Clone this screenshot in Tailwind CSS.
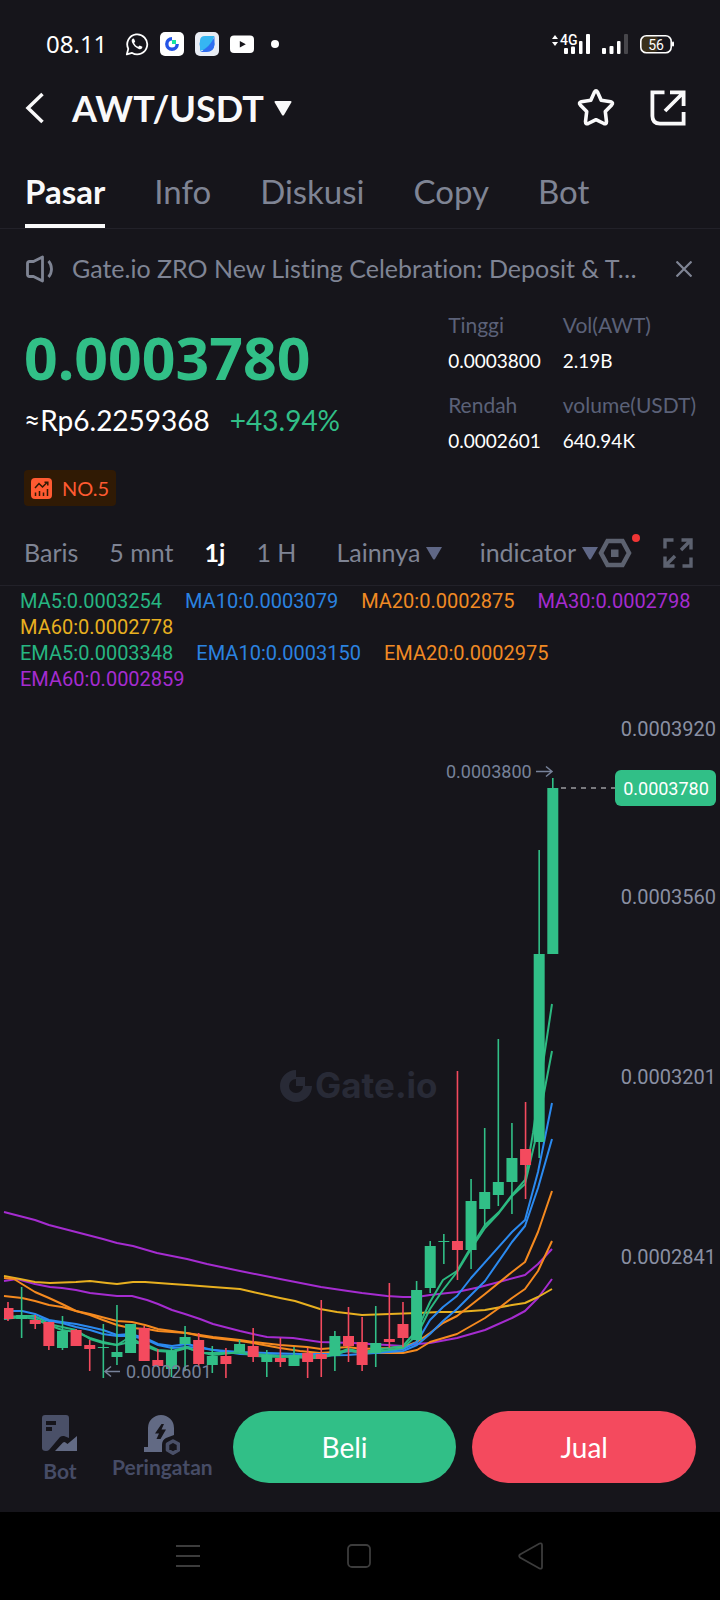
<!DOCTYPE html>
<html lang="id">

<head>
    <meta charset="UTF-8" />
    <meta name="viewport" content="width=device-width, initial-scale=1.0" />
    <title>AWT/USDT</title>
    <script src="https://cdn.jsdelivr.net/npm/@tailwindcss/browser@4"></script>
</head>

<body class="bg-black">
    <div class="bg-[#16151b] font-['Lato','Liberation_Sans',sans-serif] text-[#7f8494] overflow-hidden [font-variant-ligatures:none]">
        <!-- Status bar -->
        <div class="flex items-center h-[88px] px-[46px] text-white">
            <span class="text-2xl leading-6 mr-[18px] font-['Noto_Sans',sans-serif]">08.11</span>
            <div class="flex items-center gap-[11px]">
                <svg class="size-6" viewBox="0 0 24 24" fill="none" stroke="#fff" stroke-width="1.8">
                    <path d="M1.8 22.4l1.5-5.6a10 10 0 1 1 3.8 4.1z" stroke-linejoin="round" />
                    <path d="M8 6.6c-1.4.7-1.6 2.2-.9 3.9 1.3 3 3.6 5.3 6.7 6.4 1.7.6 3 .2 3.5-1.3l.1-.9-2.7-1.3-1.4 1.4c-1.9-.7-3.3-2-4.200-3.900l1.100-1.400-1.200-2.700z" fill="#fff" stroke="none" />
                </svg>
                <svg class="size-6" viewBox="0 0 24 24">
                    <rect width="24" height="24" rx="5" fill="#fff" />
                    <path d="M12 6.800a5.200 5.200 0 1 0 5.200 5.200" fill="none" stroke="#2354e6" stroke-width="3.400" />
                    <path d="M12 8h4v4h-4z" fill="#17e6a1" />
                </svg>
                <svg class="size-6" viewBox="0 0 24 24">
                    <rect width="24" height="24" rx="5" fill="#e9edf5" />
                    <circle cx="12" cy="12" r="7.500" fill="#2b9df0" />
                    <path d="M5 14V9q0-5 5-5h9.500C17 11 11 17 5 19z" fill="#36b6f2" />
                    <path d="M19.500 4.500v8q-.5 7.500-8 7.500H5C11 17.500 17 11.500 19.500 4.500z" fill="#2f6df0" />
                </svg>
                <svg class="size-6" viewBox="0 0 24 24">
                    <rect y="3.500" width="24" height="17.500" rx="4" fill="#fff" />
                    <path d="M9.800 9v6.500l6-3.200z" fill="#16151b" />
                </svg>
                <span class="size-2 rounded-full bg-white ml-[6px]"></span>
            </div>
            <div class="ml-auto flex items-center gap-3">
                <svg class="w-[38px] h-6" viewBox="0 0 38 24" fill="#fff">
                    <path d="M0 7l3-4 3 4zM0 10l3 4 3-4z" />
                    <text x="8" y="13" font-size="14" font-weight="500" font-family="Roboto">4G</text>
                    <rect x="12" y="16" width="4" height="6" rx="1" />
                    <rect x="19" y="14.500" width="4" height="7.500" rx="1" />
                    <rect x="27" y="9" width="3.500" height="13" rx="1" />
                    <rect x="34" y="2" width="4" height="20" rx="1" />
                </svg>
                <svg class="w-[26px] h-6" viewBox="0 0 26 24" fill="#fff">
                    <rect x="0" y="16" width="4" height="6" rx="1" />
                    <rect x="7.500" y="14" width="4" height="8" rx="1" />
                    <rect x="15" y="9" width="3.500" height="13" rx="1" />
                    <rect x="22" y="2" width="4" height="20" rx="1" fill="#47464b" />
                </svg>
                <svg class="w-[34px] h-5" viewBox="0 0 34 20">
                    <rect x="1" y="2" width="17" height="16" rx="4" fill="#3a301c" />
                    <rect x=".8" y="1.800" width="30.400" height="17" rx="5.500" fill="none" stroke="#fff" stroke-width="1.600" />
                    <rect x="32" y="7.500" width="2" height="5" rx="1" fill="#fff" />
                    <text x="16" y="15.500" text-anchor="middle" font-size="14" fill="#fff" font-family="Roboto">56</text>
                </svg>
            </div>
        </div>

        <!-- Pair header -->
        <header class="flex items-center h-10 pl-6 pr-[34px] text-[#f9f9fa]">
            <button aria-label="Kembali" class="w-5 mr-7">
                <svg class="w-5 h-8" viewBox="0 0 20 32" fill="none" stroke="currentColor" stroke-width="3.500">
                    <path d="M18.500 2L4 16l14.500 14" />
                </svg>
            </button>
            <button class="flex items-center gap-[10px]">
                <h1 class="text-4xl font-bold leading-10">AWT/USDT</h1>
                <svg class="w-[18px] h-[15px]" viewBox="0 0 18 15" fill="currentColor">
                    <path d="M1.500 0h15q1.500.2.800 1.600L10 14q-1 1.200-2 0L.700 1.600Q0 .2 1.500 0z" />
                </svg>
            </button>
            <div class="ml-auto flex items-center gap-[34px]">
                <button aria-label="Favorit">
                    <svg class="block size-10" viewBox="0 0 40 40" fill="none" stroke="currentColor" stroke-width="3.600" stroke-linejoin="round">
                        <path d="M18.400 4.200q1.600-2.600 3.200 0l3.600 8 9.500 1.600q3 .8 1 3.100l-6.400 6.700 1.200 10q0 3-2.700 1.900L20 31.700l-7.800 3.800q-2.700 1.100-2.700-1.900l1.200-10-6.400-6.700q-2-2.300 1-3.100l9.500-1.600z" />
                    </svg>
                </button>
                <button aria-label="Bagikan">
                    <svg class="block size-[36px]" viewBox="0 0 36 36" fill="none" stroke="currentColor" stroke-width="3.800">
                        <path d="M14.500 2.400H2.400V26q0 7.600 7.600 7.600H33.600V22M20 2.400h13.600V16M33 3L15 21" />
                    </svg>
                </button>
            </div>
        </header>

        <!-- Tabs -->
        <nav class="flex gap-[49px] h-[101px] px-[25px] pt-10 border-b border-[#222129] text-[33px] leading-[46px]">
            <a href="#" class="text-[#f9f9fa] font-bold border-b-4 border-[#f9f9fa]">Pasar</a>
            <a href="#">Info</a>
            <a href="#">Diskusi</a>
            <a href="#">Copy</a>
            <a href="#">Bot</a>
        </nav>

        <!-- Announcement -->
        <div class="flex items-center h-20 px-6">
            <svg class="w-8 h-8 mr-4 shrink-0" viewBox="0 0 32 32" fill="none" stroke="currentColor" stroke-width="2.800" stroke-linejoin="round">
                <path d="M5.500 8.500h4L18.500 4v24l-9-4.500h-4q-2 0-2-2v-11q0-2 2-2z" />
                <path d="M24.500 8c4 4.500 4 11.500 0 16" />
            </svg>
            <p class="text-[25px] truncate">Gate.io ZRO New Listing Celebration: Deposit &amp; T…</p>
            <button aria-label="Tutup" class="ml-auto pr-1 shrink-0">
                <svg class="block size-4" viewBox="0 0 16 16" fill="none" stroke="currentColor" stroke-width="2.200">
                    <path d="M.5.5l15 15M15.500.5l-15 15" />
                </svg>
            </button>
        </div>

        <!-- Price and 24h stats -->
        <section class="flex justify-between items-start px-6">
            <div>
                <div class="mt-4 text-[59px] leading-16 font-bold text-[#31bf87] font-['Noto_Sans',sans-serif]">0.0003780</div>
                <div class="mt-[15px] flex gap-5 text-[28px] leading-8">
                    <span class="text-white">≈Rp6.2259368</span>
                    <span class="text-[#31bf87]">+43.94%</span>
                </div>
                <a href="#" class="mt-[34px] inline-flex items-center gap-[10px] h-9 px-[7px] rounded bg-[#301a04] text-[#ff5a31] text-xl">
                    <svg class="size-[21px]" viewBox="0 0 21 21">
                        <rect width="21" height="21" rx="4" fill="#ff5a31" />
                        <path d="M4 10l4-4.500 3.500 3.500 5-5M13.500 4.200h3.300v3.300M4.500 18v-3.500M8.500 18v-5M12.500 18v-3.500M16.500 18v-7" fill="none" stroke="#301a04" stroke-width="1.500" />
                    </svg>
                    <span>NO.5</span>
                </a>
            </div>
            <dl class="grid grid-cols-[auto_auto] gap-x-[22px] gap-y-3 text-[21px] leading-8 text-[#5b6178]">
                <div>
                    <dt>Tinggi</dt>
                    <dd class="mt-1 text-[19px] leading-8 text-white">0.0003800</dd>
                </div>
                <div>
                    <dt>Vol(AWT)</dt>
                    <dd class="mt-1 text-[19px] leading-8 text-white">2.19B</dd>
                </div>
                <div>
                    <dt>Rendah</dt>
                    <dd class="mt-1 text-[19px] leading-8 text-white">0.0002601</dd>
                </div>
                <div>
                    <dt>volume(USDT)</dt>
                    <dd class="mt-1 text-[19px] leading-8 text-white">640.94K</dd>
                </div>
            </dl>
        </section>

        <!-- Interval toolbar -->
        <div class="flex items-center mt-[15px] h-[65px] pl-6 pr-[26px] border-b border-[#222129] text-[25px]">
            <div class="flex items-center gap-[31px]">
                <button>Baris</button>
                <button>5 mnt</button>
                <button class="text-white font-bold">1j</button>
                <button>1 H</button>
            </div>
            <button class="ml-10 flex items-center gap-[6px]">Lainnya
                <svg class="w-4 h-[13px]" viewBox="0 0 16 13" fill="#5f6786"><path d="M0 0h16L9 12q-1 1-2 0z" /></svg>
            </button>
            <button class="ml-auto flex items-center gap-[6px]">indicator
                <svg class="w-4 h-[13px]" viewBox="0 0 16 13" fill="#5f6786"><path d="M0 0h16L9 12q-1 1-2 0z" /></svg>
            </button>
            <button aria-label="Pengaturan" class="relative">
                <svg class="block w-[34px] h-[30px]" viewBox="0 0 34 30" fill="none" stroke="#5d6270" stroke-width="4.500">
                    <path d="M9.500 3h15L31 15l-6.500 12h-15L3 15z" />
                    <path d="M13 11.500h7.500v7.500H13z" fill="#5d6270" stroke="none" />
                </svg>
                <span class="absolute -top-1 -right-2 size-2 rounded-full bg-[#f03535]"></span>
            </button>
            <button aria-label="Layar penuh" class="ml-[30px]">
                <svg class="block size-[32px]" viewBox="0 0 32 32" fill="none" stroke="#5d6270" stroke-width="3.400">
                    <path d="M3 11.500V3h8.500M19.500 3H29v9.500M28.500 3.500L19 13M29 20.500V29h-8.500M12.500 29H3v-9.500M3.500 28.500L13 19" />
                </svg>
            </button>
        </div>

        <!-- Moving averages -->
        <div class="pt-[2px] px-5 text-xl leading-[26px] font-['Roboto',sans-serif]">
            <div class="flex flex-wrap gap-x-[23px]">
                <span class="text-[#26b582]">MA5:0.0003254</span>
                <span class="text-[#2b83e0]">MA10:0.0003079</span>
                <span class="text-[#f08a24]">MA20:0.0002875</span>
                <span class="text-[#a52cd0]">MA30:0.0002798</span>
                <span class="text-[#e8b020]">MA60:0.0002778</span>
            </div>
            <div class="flex flex-wrap gap-x-[23px]">
                <span class="text-[#26b582]">EMA5:0.0003348</span>
                <span class="text-[#2b83e0]">EMA10:0.0003150</span>
                <span class="text-[#f08a24]">EMA20:0.0002975</span>
                <span class="text-[#a52cd0]">EMA60:0.0002859</span>
            </div>
        </div>

        <!-- Candlestick chart -->
        <svg class="block w-full h-auto font-['Roboto',sans-serif]" viewBox="0 0 720 690">
            <g fill="#282a36">
                <path d="M296 378a16 16 0 1 0 16 16h-9a7 7 0 1 1-7-7z" />
                <path d="M296 385h9v9h-9z" />
                <text x="315" y="406" font-size="35" font-weight="700" font-family="Inter">Gate.io</text>
            </g>
            <g id="lines" fill="none" stroke-width="2" stroke-linejoin="round">
                <polyline stroke="#a52cd0" points="4,520 35,528 49,533 76,540 103,547 117,551 133,554 157,561 172,564 187,567 207,572 240,579 280,587 321,595 348,599 362,601 387,604 403,605 417,605 430,603 457,600 480,595 499,590 525,583 538,572 552,557" />
                <polyline stroke="#a52cd0" points="4,589 17,587 35,592 50,595 62,596 76,598 90,601 117,604 132,604 147,608 158,612 172,618 185,622 200,627 213,632 240,639 253,642 267,645 293,646 320,650 353,651 387,653 403,654 417,652 430,651 457,646 485,638 512,626 525,619 538,606 552,587" />
                <polyline stroke="#e8b020" points="4,584 20,587 35,590 50,591 76,590 90,589 107,591 117,592 133,590 145,590 172,592 187,593 213,595 240,597 253,600 280,606 295,609 320,617 337,620 362,623 390,622 417,621 440,620 457,620 485,618 512,613 525,611 538,605 552,597" />
                <polyline stroke="#f58a1f" points="4,586 14,587 22,592 35,600 49,606 62,612 76,619 90,623 103,628 117,633 130,636 147,637 158,639 172,640 187,641 200,644 213,646 240,649 253,651 280,656 300,659 320,661 348,659 377,661 403,661 417,658 430,650 457,642 485,626 499,616 512,606 525,597 538,579 552,549" />
                <polyline stroke="#f58a1f" points="4,604 22,606 35,609 49,613 62,615 76,619 90,622 117,629 132,630 145,633 158,637 172,639 200,643 213,645 240,648 253,650 280,653 307,655 321,657 348,655 362,657 387,656 403,655 417,650 430,641 443,631 457,624 485,602 512,580 525,570 538,540 552,499" />
                <polyline stroke="#2b8af0" points="4,619 22,619 35,622 49,628 62,630 76,632 90,635 103,638 117,643 130,642 145,646 158,652 172,654 187,652 200,655 213,658 240,660 267,661 300,662 335,662 348,659 375,661 403,657 417,650 430,628 443,615 457,604 471,586 512,540 525,528 538,480 552,411" />
                <polyline stroke="#2b8af0" points="4,627 22,624 35,625 49,629 62,631 76,635 90,638 103,642 117,644 130,644 145,647 158,653 172,656 187,655 200,656 240,662 267,663 300,664 348,663 375,661 403,659 417,653 430,642 443,629 457,617 485,589 512,550 525,534 538,496 552,447" />
                <polyline stroke="#2cb980" points="4,625 22,624 35,624 49,632 62,635 76,638 90,647 103,651 117,653 130,650 145,652 158,658 172,659 187,655 200,661 213,661 240,661 253,662 280,664 307,666 321,666 335,662 348,657 362,660 375,658 403,654 417,638 430,610 443,588 457,579 471,555 485,533 499,520 512,503 525,488 533,441 544,365 552,312" />
                <polyline stroke="#2cb980" points="4,627 22,625 35,627 49,633 62,638 76,640 90,646 103,650 117,653 130,645 145,654 158,659 172,660 187,656 200,660 213,663 240,660 253,664 280,665 307,664 321,664 335,663 348,658 362,661 375,660 403,656 417,643 430,617 443,598 457,580 471,557 485,536 499,521 512,504 525,492 537,441 544,401 552,359" />
            </g>
            <g id="candles"></g>
            <path d="M561 96h56" stroke="#9a9ba0" stroke-width="1.500" stroke-dasharray="5 5" />
            <g fill="#8a90a3" font-size="20" text-anchor="end">
                <text x="716" y="44">0.0003920</text>
                <text x="716" y="212">0.0003560</text>
                <text x="716" y="392">0.0003201</text>
                <text x="716" y="572">0.0002841</text>
            </g>
            <rect x="615" y="78" width="101" height="36" rx="6" fill="#31bf87" />
            <text x="666" y="103" font-size="18" fill="#fff" text-anchor="middle">0.0003780</text>
            <g fill="#77829a" font-size="18">
                <text x="446" y="86">0.0003800</text>
                <text x="126" y="686">0.0002601</text>
            </g>
            <path d="M536 79.500h16m-6-5l6 5-6 5M120 679.500h-15m6-5l-6 5 6 5" fill="none" stroke="#77829a" stroke-width="1.500" />
        </svg>

        <!-- Trade bar -->
        <div class="flex items-center h-[130px] pl-[42px] pr-6 text-[21px] leading-6 font-bold text-[#464c66]">
            <button class="flex flex-col items-center gap-2 pt-1 mr-[34px]">
                <svg class="w-9 h-9" viewBox="0 0 36 36">
                    <path d="M3 0h21q3 0 3 3v20l-5-2q-2-.5-4 1L7 35q-1 1-3 1-4 0-4-3V3q0-3 3-3z" fill="#4a5068" />
                    <path d="M4 6h10v4H4zM4 12h6v4H4z" fill="#16151b" />
                    <path d="M13 36l8-8.500q1.500-1 2.500 0l2 1.500L35 21v15z" fill="#626a84" />
                </svg>
                <span>Bot</span>
            </button>
            <button class="flex flex-col items-center mr-5">
                <svg class="w-9 h-10" viewBox="0 0 36 40">
                    <path d="M4 32V13a13 13 0 0 1 26 0v7l-8 3q-4 2-4 7v7H0v-5z" fill="#626a84" />
                    <path d="M17.500 9L11 18.500h4L12.500 24h4L22 14.500h-4.500L20 9z" fill="#16151b" />
                    <path d="M29 26l5.500 3v6L29 38.200 23.500 35v-6z" fill="none" stroke="#4a5068" stroke-width="3.600" stroke-linejoin="round" />
                </svg>
                <span>Peringatan</span>
            </button>
            <button class="flex-1 h-18 rounded-full bg-[#31bf87] text-white text-[28px] font-normal">Beli</button>
            <button class="flex-1 h-18 ml-4 rounded-full bg-[#f44a5e] text-white text-[28px] font-normal">Jual</button>
        </div>
    </div>

    <!-- System navigation -->
    <div class="flex items-center justify-between h-[88px] px-44 bg-black text-[#3c3c3c]">
        <button aria-label="Menu">
            <svg class="block size-6" viewBox="0 0 24 24" stroke="currentColor" stroke-width="2"><path d="M0 2h24M0 12h24M0 22h24" /></svg>
        </button>
        <button aria-label="Beranda">
            <svg class="block size-6" viewBox="0 0 24 24" fill="none" stroke="currentColor" stroke-width="1.800"><rect x="1" y="1" width="22" height="22" rx="4" /></svg>
        </button>
        <button aria-label="Kembali">
            <svg class="block w-[26px] h-[28px]" viewBox="0 0 26 28" fill="none" stroke="currentColor" stroke-width="1.800"><path d="M2 12.500L21.500 1.500q2.500-.8 2.500 1.500v22q0 2.300-2.500 1.500L2 15.500q-1.500-1.500 0-3z" /></svg>
        </button>
    </div>

    <script>
        // [up, wick top, body top, body bottom, wick bottom]
        const candles = [
            [0, 610, 616, 627, 629], [1, 595, 623, 627, 646], [0, 623, 628, 632, 637], [0, 630, 630, 654, 658],
            [1, 624, 639, 656, 658], [0, 637, 638, 654, 654], [0, 648, 653, 657, 679], [1, 632, 655, 656, 686],
            [1, 613, 660, 665, 673], [1, 632, 632, 661, 661], [0, 634, 636, 669, 669], [0, 657, 668, 674, 675],
            [1, 655, 659, 677, 685], [1, 634, 645, 652, 679], [0, 641, 648, 672, 675], [1, 654, 664, 673, 681],
            [0, 656, 664, 672, 686], [1, 648, 652, 660, 661], [0, 636, 654, 665, 670], [1, 658, 663, 670, 685],
            [0, 646, 666, 670, 675], [1, 655, 663, 674, 674], [0, 656, 661, 670, 686], [0, 608, 662, 667, 685],
            [1, 639, 644, 664, 679], [0, 615, 644, 654, 670], [0, 625, 650, 673, 679], [1, 614, 651, 661, 675],
            [0, 591, 647, 650, 656], [0, 610, 632, 646, 655], [1, 589, 598, 648, 649], [1, 549, 554, 596, 601],
            [1, 542, 549, 550, 572], [0, 379, 549, 558, 588], [1, 487, 509, 558, 577], [1, 436, 500, 517, 534],
            [1, 347, 490, 503, 514], [1, 431, 466, 490, 522], [0, 410, 457, 473, 507], [1, 158, 262, 450, 466],
            [1, 86, 96, 262, 262],
        ];
        const step = 13.62;
        let html = '';
        candles.forEach(([up, top, open, close, bottom], i) => {
            const x = 8 + i * step;
            const left = Math.max(4, x - 5.5);
            const color = up ? '#31bf87' : '#f44a5e';
            html += `<path d="M${x} ${top}V${bottom}" stroke="${color}" stroke-width="1.6" />
                <rect x="${left}" y="${open}" width="${x + 5.5 - left}" height="${close - open}" fill="${color}" />`;
        });
        document.getElementById('candles').innerHTML = html;
    </script>
</body>

</html>
